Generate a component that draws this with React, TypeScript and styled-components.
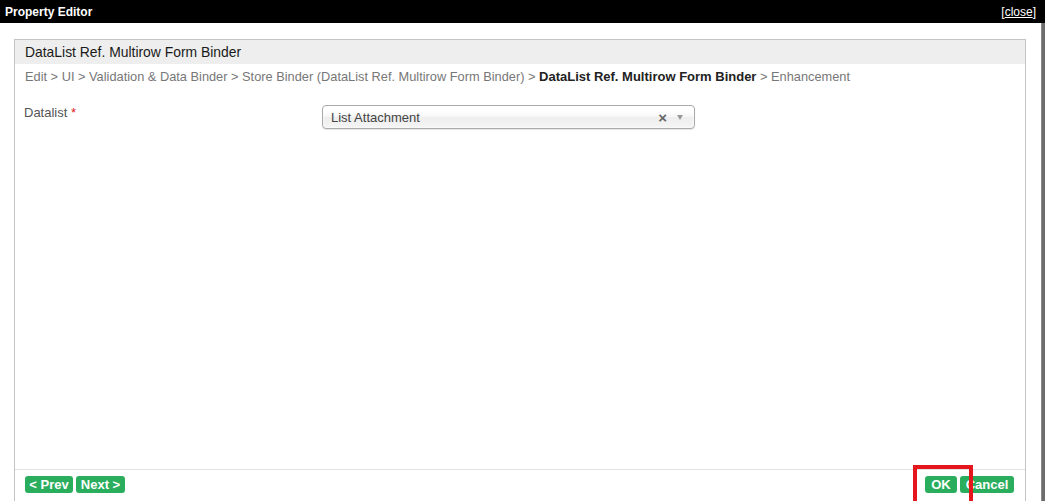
import React from "react";
import styled, { createGlobalStyle } from "styled-components";

const Global = createGlobalStyle`
  html, body { margin: 0; padding: 0; background: #fff; }
  body { font-family: "Liberation Sans", Arial, sans-serif; }
  * { box-sizing: border-box; }
`;

const Page = styled.div`
  position: relative;
  width: 1045px;
  height: 501px;
  display: flex;
  flex-direction: column;
  overflow: hidden;
`;

const TitleBar = styled.div`
  height: 23px;
  flex: none;
  background: #000;
  color: #fff;
  display: flex;
  align-items: center;
  justify-content: space-between;
  padding: 0 9px 0 5px;
  font-size: 12px;
`;

const TitleText = styled.span`
  font-weight: bold;
`;

const CloseLink = styled.span`
  font-size: 12px;
  color: #fff;
  & u { text-decoration: underline; }
`;

const Body = styled.div`
  flex: 1;
  display: flex;
  min-height: 0;
`;

const Main = styled.div`
  flex: 1;
  display: flex;
  padding: 16px 15px 0 14px;
  min-width: 0;
`;

const ScrollStrip = styled.div`
  width: 4px;
  flex: none;
  background: #6c6c6c;
  border-left: 1px solid #8a8a8a;
`;

const Panel = styled.div`
  flex: 1;
  display: flex;
  flex-direction: column;
  border: 1px solid #c4c4c4;
  border-bottom: none;
`;

const PanelHeader = styled.div`
  height: 24px;
  background: #eeeeee;
  display: flex;
  align-items: center;
  padding-left: 10px;
  font-size: 13.9px;
  color: #1a1a1a;
`;

const Crumbs = styled.div`
  padding: 4px 10px 0 10px;
  line-height: 18px;
  font-size: 12.8px;
  color: #777;
`;

const CrumbCurrent = styled.span`
  color: #222;
  font-weight: bold;
  font-size: 13px;
`;

const FormRow = styled.div`
  margin-top: 19px;
  display: grid;
  grid-template-columns: 298px 373px;
  padding-left: 9px;
`;

const Label = styled.div`
  font-size: 13px;
  color: #555;
  line-height: 16px;
`;

const Required = styled.span`
  color: #e02020;
`;

const Select = styled.div`
  height: 24px;
  border: 1px solid #aaa;
  border-radius: 4px;
  background: linear-gradient(to bottom, #ffffff 20%, #f6f6f6 50%, #eeeeee 52%, #f4f4f4 100%);
  box-shadow: 0 0 3px #fff inset, 0 1px 1px rgba(0,0,0,0.1);
  display: flex;
  align-items: center;
  padding: 0 11px 0 8px;
  font-size: 13px;
  color: #444;
`;

const SelectValue = styled.span`
  flex: 1;
`;

const ClearIcon = styled.span`
  font-size: 15px;
  font-weight: bold;
  color: #666;
  margin-right: 10px;
  line-height: 1;
`;

const Caret = styled.span`
  width: 0;
  height: 0;
  border-left: 3.5px solid transparent;
  border-right: 3.5px solid transparent;
  border-top: 5px solid #999;
`;

const Spacer = styled.div`
  flex: 1;
`;

const Footer = styled.div`
  height: 32px;
  flex: none;
  border-top: 1px solid #e3e3e3;
  display: flex;
  justify-content: space-between;
  align-items: flex-start;
  padding: 6px 11px 0 10px;
`;

const ButtonGroup = styled.div`
  display: flex;
  gap: 3px;
`;

const Button = styled.button<{ $w: number }>`
  width: ${(p) => p.$w}px;
  height: 17px;
  padding: 0;
  border: none;
  border-radius: 3px;
  background: #2aae5e;
  color: #fff;
  font-family: "Liberation Sans", Arial, sans-serif;
  font-weight: bold;
  font-size: 13px;
  line-height: 17px;
  text-align: center;
`;

const Highlight = styled.div`
  position: absolute;
  left: 913px;
  top: 465px;
  width: 60px;
  height: 42px;
  border: 4px solid #e5161c;
  pointer-events: none;
`;

export default function App() {
  return (
    <Page>
      <Global />
      <TitleBar>
        <TitleText>Property Editor</TitleText>
        <CloseLink>
          [<u>close</u>]
        </CloseLink>
      </TitleBar>
      <Body>
        <Main>
          <Panel>
            <PanelHeader>DataList Ref. Multirow Form Binder</PanelHeader>
            <Crumbs>
              Edit &gt; UI &gt; Validation &amp; Data Binder &gt; Store Binder (DataList Ref. Multirow Form Binder) &gt;{" "}
              <CrumbCurrent>DataList Ref. Multirow Form Binder</CrumbCurrent> &gt; Enhancement
            </Crumbs>
            <FormRow>
              <Label>
                Datalist <Required>*</Required>
              </Label>
              <Select>
                <SelectValue>List Attachment</SelectValue>
                <ClearIcon>×</ClearIcon>
                <Caret />
              </Select>
            </FormRow>
            <Spacer />
            <Footer>
              <ButtonGroup>
                <Button $w={48}>&lt; Prev</Button>
                <Button $w={49}>Next &gt;</Button>
              </ButtonGroup>
              <ButtonGroup>
                <Button $w={32}>OK</Button>
                <Button $w={54}>Cancel</Button>
              </ButtonGroup>
            </Footer>
          </Panel>
        </Main>
        <ScrollStrip />
      </Body>
      <Highlight />
    </Page>
  );
}
